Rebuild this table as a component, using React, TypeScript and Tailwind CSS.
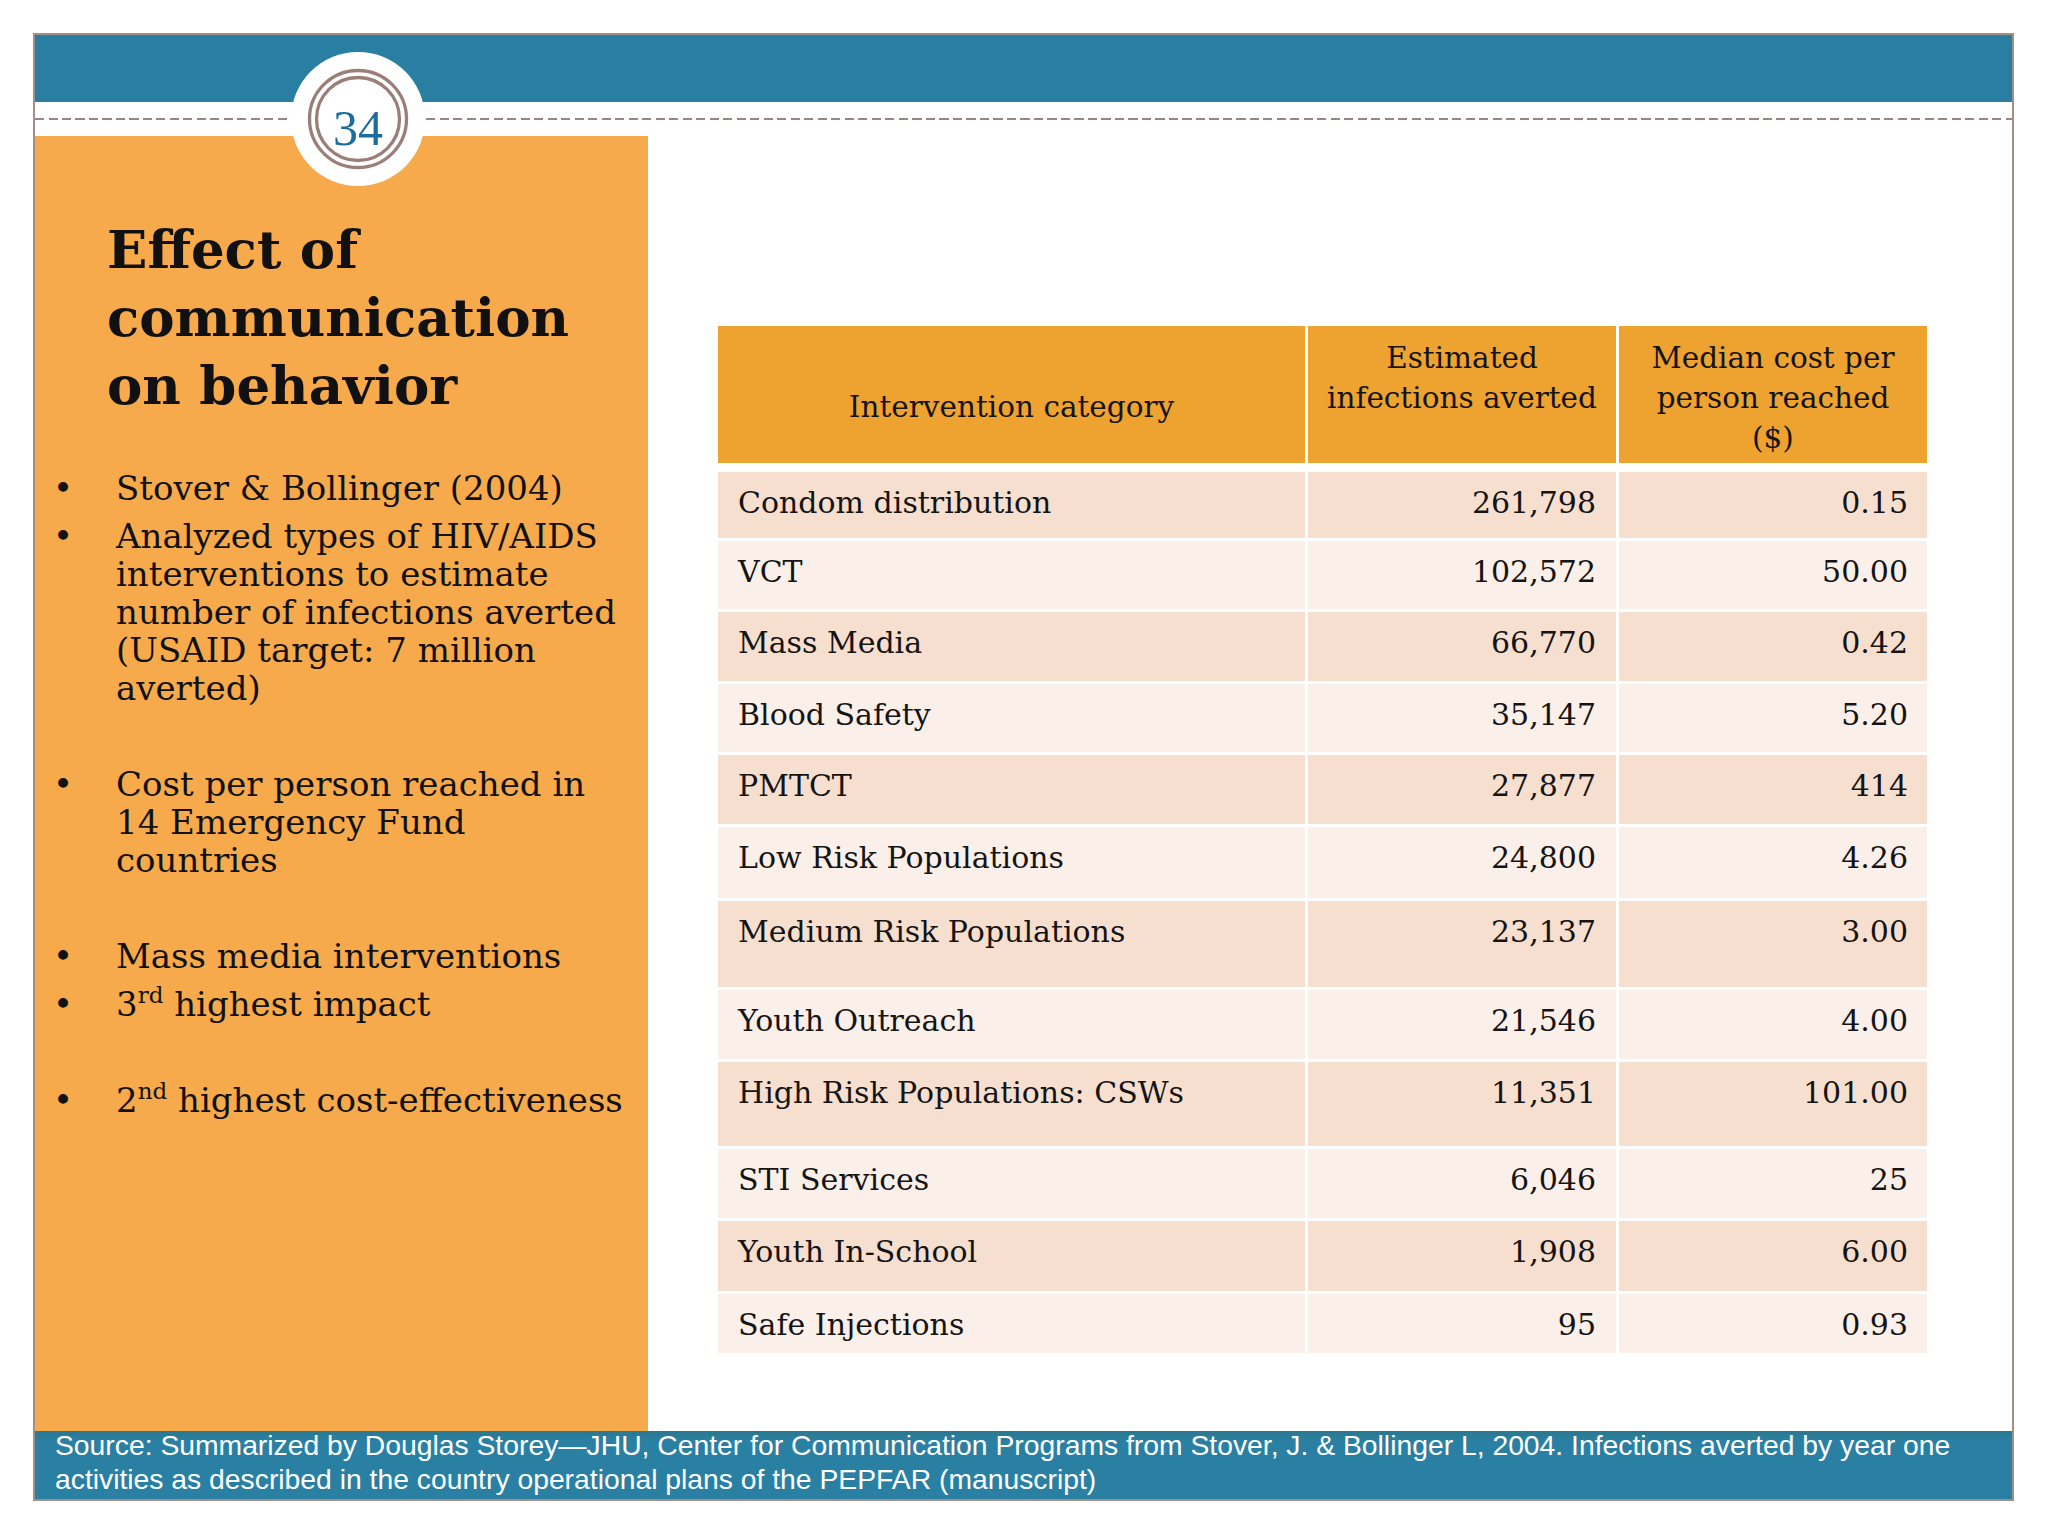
import React from "react";

const serif = { fontFamily: '"DejaVu Serif", serif' };

type Row = { name: string; inf: string; cost: string; h: string; bg: string };

const DARK = "bg-[#f7dfcf]";
const LIGHT = "bg-[#fbefe9]";

const rows: Row[] = [
  { name: "Condom distribution", inf: "261,798", cost: "0.15", h: "h-[66px]", bg: DARK },
  { name: "VCT", inf: "102,572", cost: "50.00", h: "h-[68px]", bg: LIGHT },
  { name: "Mass Media", inf: "66,770", cost: "0.42", h: "h-[69px]", bg: DARK },
  { name: "Blood Safety", inf: "35,147", cost: "5.20", h: "h-[68px]", bg: LIGHT },
  { name: "PMTCT", inf: "27,877", cost: "414", h: "h-[69px]", bg: DARK },
  { name: "Low Risk Populations", inf: "24,800", cost: "4.26", h: "h-[71px]", bg: LIGHT },
  { name: "Medium Risk Populations", inf: "23,137", cost: "3.00", h: "h-[86px]", bg: DARK },
  { name: "Youth Outreach", inf: "21,546", cost: "4.00", h: "h-[69px]", bg: LIGHT },
  { name: "High Risk Populations: CSWs", inf: "11,351", cost: "101.00", h: "h-[84px]", bg: DARK },
  { name: "STI Services", inf: "6,046", cost: "25", h: "h-[69px]", bg: LIGHT },
  { name: "Youth In-School", inf: "1,908", cost: "6.00", h: "h-[70px]", bg: DARK },
  { name: "Safe Injections", inf: "95", cost: "0.93", h: "h-[59px]", bg: LIGHT },
];

function Bullet({ children, empty }: { children?: React.ReactNode; empty?: boolean }) {
  return (
    <div className="flex mt-[10px] leading-[38px]">
      <div className="w-[81px] pl-[18px] shrink-0">{empty ? "" : "•"}</div>
      <div className="flex-1 whitespace-nowrap">{empty ? "\u00a0" : children}</div>
    </div>
  );
}

export default function App() {
  return (
    <div className="relative w-[2048px] h-[1536px] bg-white overflow-hidden">
      <div className="pt-[33px] pl-[33px]">
        <div className="w-[1981px] h-[1468px] border-2 border-[#a58d88] flex flex-col">
          {/* top blue bar */}
          <div className="h-[67px] bg-[#287fa2] shrink-0" />
          {/* white band with dashed line */}
          <div className="h-[34px] flex items-center shrink-0">
            <div className="w-full h-[2px] bg-[repeating-linear-gradient(to_right,#9d8480_0_9px,transparent_9px_13.5px)]" />
          </div>
          {/* main */}
          <div className="flex flex-1 min-h-0">
            <div className="w-[613px] bg-[#f6aa4b] text-[#111] pl-[72px] pr-[8px] pt-[79px]" style={serif}>
              <div className="text-[53px] font-bold leading-[68px]">
                Effect of
                <br />
                communication
                <br />
                on behavior
              </div>
              <div className="-ml-[72px] mt-[50px] text-[34px]">
                <Bullet>Stover &amp; Bollinger (2004)</Bullet>
                <Bullet>
                  Analyzed types of HIV/AIDS
                  <br />
                  interventions to estimate
                  <br />
                  number of infections averted
                  <br />
                  (USAID target: 7 million
                  <br />
                  averted)
                </Bullet>
                <Bullet empty />
                <Bullet>
                  Cost per person reached in
                  <br />
                  14 Emergency Fund
                  <br />
                  countries
                </Bullet>
                <Bullet empty />
                <Bullet>Mass media interventions</Bullet>
                <Bullet>
                  3<sup className="text-[23px] -top-[13px]">rd</sup> highest impact
                </Bullet>
                <Bullet empty />
                <Bullet>
                  2<sup className="text-[23px] -top-[13px]">nd</sup> highest cost-effectiveness
                </Bullet>
              </div>
            </div>
            <div className="flex-1 pl-[70px] pt-[190px]" style={serif}>
              <div className="w-[1209px] text-[30px] leading-[40px] text-[#141414]">
                <div className="grid grid-cols-[587px_308px_308px] gap-x-[3px] h-[137px]">
                  <div className="bg-[#eea230] text-center pt-[61px] text-[29.5px]">Intervention category</div>
                  <div className="bg-[#eea230] text-center pt-[12px] text-[29.5px]">
                    Estimated
                    <br />
                    infections averted
                  </div>
                  <div className="bg-[#eea230] text-center pt-[12px] text-[29.5px]">
                    Median cost per
                    <br />
                    person reached
                    <br />
                    ($)
                  </div>
                </div>
                <div className="mt-[9px] flex flex-col gap-y-[3px]">
                  {rows.map((r) => (
                    <div key={r.name} className={`grid grid-cols-[587px_308px_308px] gap-x-[3px] ${r.h}`}>
                      <div className={`${r.bg} pl-[20px] pt-[11px]`}>{r.name}</div>
                      <div className={`${r.bg} pr-[20px] pt-[11px] text-right`}>{r.inf}</div>
                      <div className={`${r.bg} pr-[19px] pt-[11px] text-right`}>{r.cost}</div>
                    </div>
                  ))}
                </div>
              </div>
            </div>
          </div>
          {/* footer */}
          <div
            className="h-[68px] shrink-0 bg-[linear-gradient(to_bottom,#2b7890_0px,#2a80a3_10px,#2a80a3_100%)] text-white text-[28.3px] leading-[34px] pl-[20px]"
            style={{ fontFamily: '"Liberation Sans", Arial, sans-serif' }}
          >
            <div className="-mt-[3px]">
              <div className="whitespace-nowrap">
                Source: Summarized by Douglas Storey—JHU, Center for Communication Programs from Stover, J. &amp; Bollinger L, 2004. Infections averted by year one
              </div>
              <div className="whitespace-nowrap">
                activities as described in the country operational plans of the PEPFAR (manuscript)
              </div>
            </div>
          </div>
        </div>
      </div>
      {/* page number badge */}
      <div className="absolute left-[291px] top-[52px] w-[134px] h-[134px] rounded-full bg-white flex items-center justify-center">
        <svg width="134" height="134" viewBox="0 0 134 134" className="absolute inset-0">
          <circle cx="67" cy="67" r="48.5" fill="none" stroke="#9c7e78" strokeWidth="3.3" />
          <circle cx="67" cy="67" r="41.5" fill="none" stroke="#9c7e78" strokeWidth="3.3" />
        </svg>
        <span
          className="relative text-[50px] leading-none text-[#1c6d9c] mt-[18px]"
          style={{ fontFamily: '"Liberation Serif", serif' }}
        >
          34
        </span>
      </div>
    </div>
  );
}
